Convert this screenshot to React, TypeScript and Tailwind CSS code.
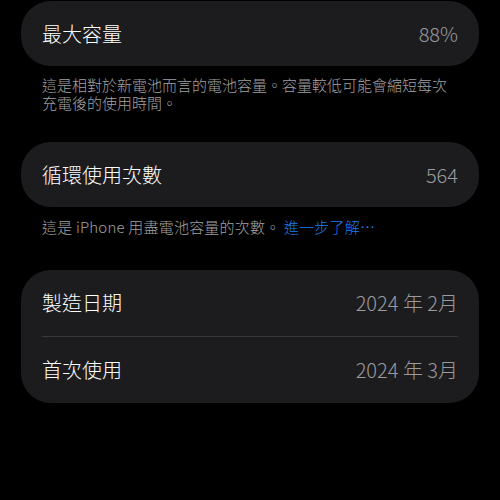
export default function App() {
  const font = { fontFamily: '"Noto Sans CJK TC", "Noto Sans", sans-serif' };
  return (
    <div className="w-[500px] h-[500px] bg-black overflow-hidden" style={font}>
      <div className="px-[21px] pt-[1px]">
        <div className="h-[65px] rounded-[30px] bg-[#1c1c1e] flex items-center justify-between px-[21px]">
          <span className="text-[20px] text-white leading-none font-light">最大容量</span>
          <span className="text-[20px] text-[#9a9a9f] leading-none font-light">88%</span>
        </div>
        <p className="mt-[10px] px-[21px] text-[15px] leading-[17.5px] tracking-[0px] text-[#a0a0a5] font-light">
          這是相對於新電池而言的電池容量。容量較低可能會縮短每次充電後的使用時間。
        </p>
        <div className="mt-[31px] h-[65px] rounded-[30px] bg-[#1c1c1e] flex items-center justify-between px-[21px]">
          <span className="text-[20px] text-white leading-none font-light">循環使用次數</span>
          <span className="text-[20px] text-[#9a9a9f] leading-none font-light">564</span>
        </div>
        <p className="mt-[11px] px-[21px] text-[15px] leading-[17.5px] tracking-[0.2px] text-[#a0a0a5] font-light">
          這是 iPhone 用盡電池容量的次數。 <span className="text-[#1a7ff0]">進一步了解⋯</span>
        </p>
        <div className="mt-[34px] rounded-[30px] bg-[#1c1c1e] px-[21px]">
          <div className="h-[66px] flex items-center justify-between">
            <span className="text-[20px] text-white leading-none font-light">製造日期</span>
            <span className="text-[20px] text-[#9a9a9f] leading-none font-light">2024 年 2月</span>
          </div>
          <div className="h-px bg-[#38383a]" />
          <div className="h-[66px] flex items-center justify-between">
            <span className="text-[20px] text-white leading-none font-light">首次使用</span>
            <span className="text-[20px] text-[#9a9a9f] leading-none font-light">2024 年 3月</span>
          </div>
        </div>
      </div>
    </div>
  );
}
